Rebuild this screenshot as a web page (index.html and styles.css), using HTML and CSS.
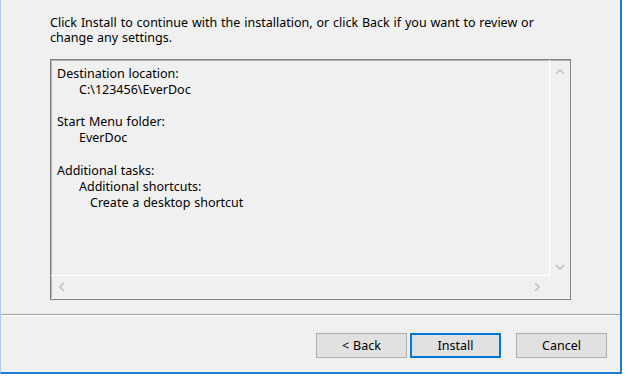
FILE: index.html
```html
<!DOCTYPE html>
<html lang="en">
<head>
  <meta charset="UTF-8">
  <title>Setup - EverDoc</title>
  <link rel="stylesheet" href="styles.css">
</head>
<body>
  <div class="window">
    <p class="intro">Click Install to continue with the installation, or click Back if you want to review or change any settings.</p>

    <div class="memo">
      <div class="memo-text">
        <div class="line">Destination location:</div>
        <div class="line lvl1">C:\123456\EverDoc</div>
        <div class="line blank"></div>
        <div class="line">Start Menu folder:</div>
        <div class="line lvl1">EverDoc</div>
        <div class="line blank"></div>
        <div class="line">Additional tasks:</div>
        <div class="line lvl1">Additional shortcuts:</div>
        <div class="line lvl2">Create a desktop shortcut</div>
      </div>
      <div class="vscroll">
        <svg class="arrow" width="10" height="6" viewBox="0 0 10 6"><polyline points="1,5 5,1 9,5" /></svg>
        <svg class="arrow" width="10" height="6" viewBox="0 0 10 6"><polyline points="1,1 5,5 9,1" /></svg>
      </div>
      <div class="hscroll">
        <svg class="arrow" width="6" height="10" viewBox="0 0 6 10"><polyline points="5,1 1,5 5,9" /></svg>
        <svg class="arrow" width="6" height="10" viewBox="0 0 6 10"><polyline points="1,1 5,5 1,9" /></svg>
      </div>
      <div class="corner"></div>
    </div>

    <div class="separator"></div>

    <div class="buttons">
      <button class="btn">&lt; Back</button>
      <button class="btn default">Install</button>
      <button class="btn cancel">Cancel</button>
    </div>
  </div>
</body>
</html>
```

FILE: styles.css
```css
* {
  margin: 0;
  padding: 0;
  box-sizing: border-box;
}
body {
  background: #ffffff;
  font-family: 'Segoe UI', 'Noto Sans', sans-serif;
  font-size: 12.5px;
  word-spacing: 0.6px;
  color: #000;
}
.window {
  width: 622px;
  height: 374px;
  background: #f0f0f0;
  border-left: 1px solid #a8cdee;
  border-right: 2px solid #1c7fd6;
  border-bottom: 2px solid #1c7fd6;
}
.intro {
  padding: 15px 70px 0 49px;
  line-height: 15px;
  height: 46px;
}
.memo {
  margin: 13px 0 0 49px;
  width: 521px;
  height: 241px;
  border: 1px solid #828282;
  box-shadow: inset 1px 1px 0 #b4b4b4;
  display: grid;
  grid-template-columns: 1fr 20px;
  grid-template-rows: 1fr 23px;
}
.memo-text {
  padding: 6px 0 0 6px;
  border-right: 1px solid #fff;
  border-bottom: 1px solid #fff;
  line-height: 16.1px;
}
.line.blank {
  height: 16.1px;
}
.lvl1 {
  padding-left: 22px;
}
.lvl2 {
  padding-left: 33px;
}
.vscroll {
  display: flex;
  flex-direction: column;
  justify-content: space-between;
  align-items: center;
  padding: 9px 1px 6px 0;
}
.hscroll {
  display: flex;
  justify-content: space-between;
  align-items: center;
  padding: 0 10px 1px 8px;
  border-bottom: 1px dashed #fbfbfb;
}
.corner {
  border-bottom: 1px dashed #fbfbfb;
}
.arrow polyline {
  fill: none;
  stroke: #c3c3c3;
  stroke-width: 1.6;
}
.separator {
  margin-top: 14px;
  height: 2px;
  border-top: 1px solid #a0a0a0;
  border-bottom: 1px solid #fff;
}
.buttons {
  display: flex;
  justify-content: flex-end;
  margin-top: 17px;
  padding-right: 13px;
}
.btn {
  width: 91px;
  height: 25px;
  background: #e1e1e1;
  border: 1px solid #adadad;
  font-family: inherit;
  font-size: 12.5px;
  word-spacing: 0.6px;
  color: #000;
  margin-left: 3px;
}
.btn.default {
  border: 2px solid #0078d7;
}
.btn.cancel {
  margin-left: 15px;
}
```
